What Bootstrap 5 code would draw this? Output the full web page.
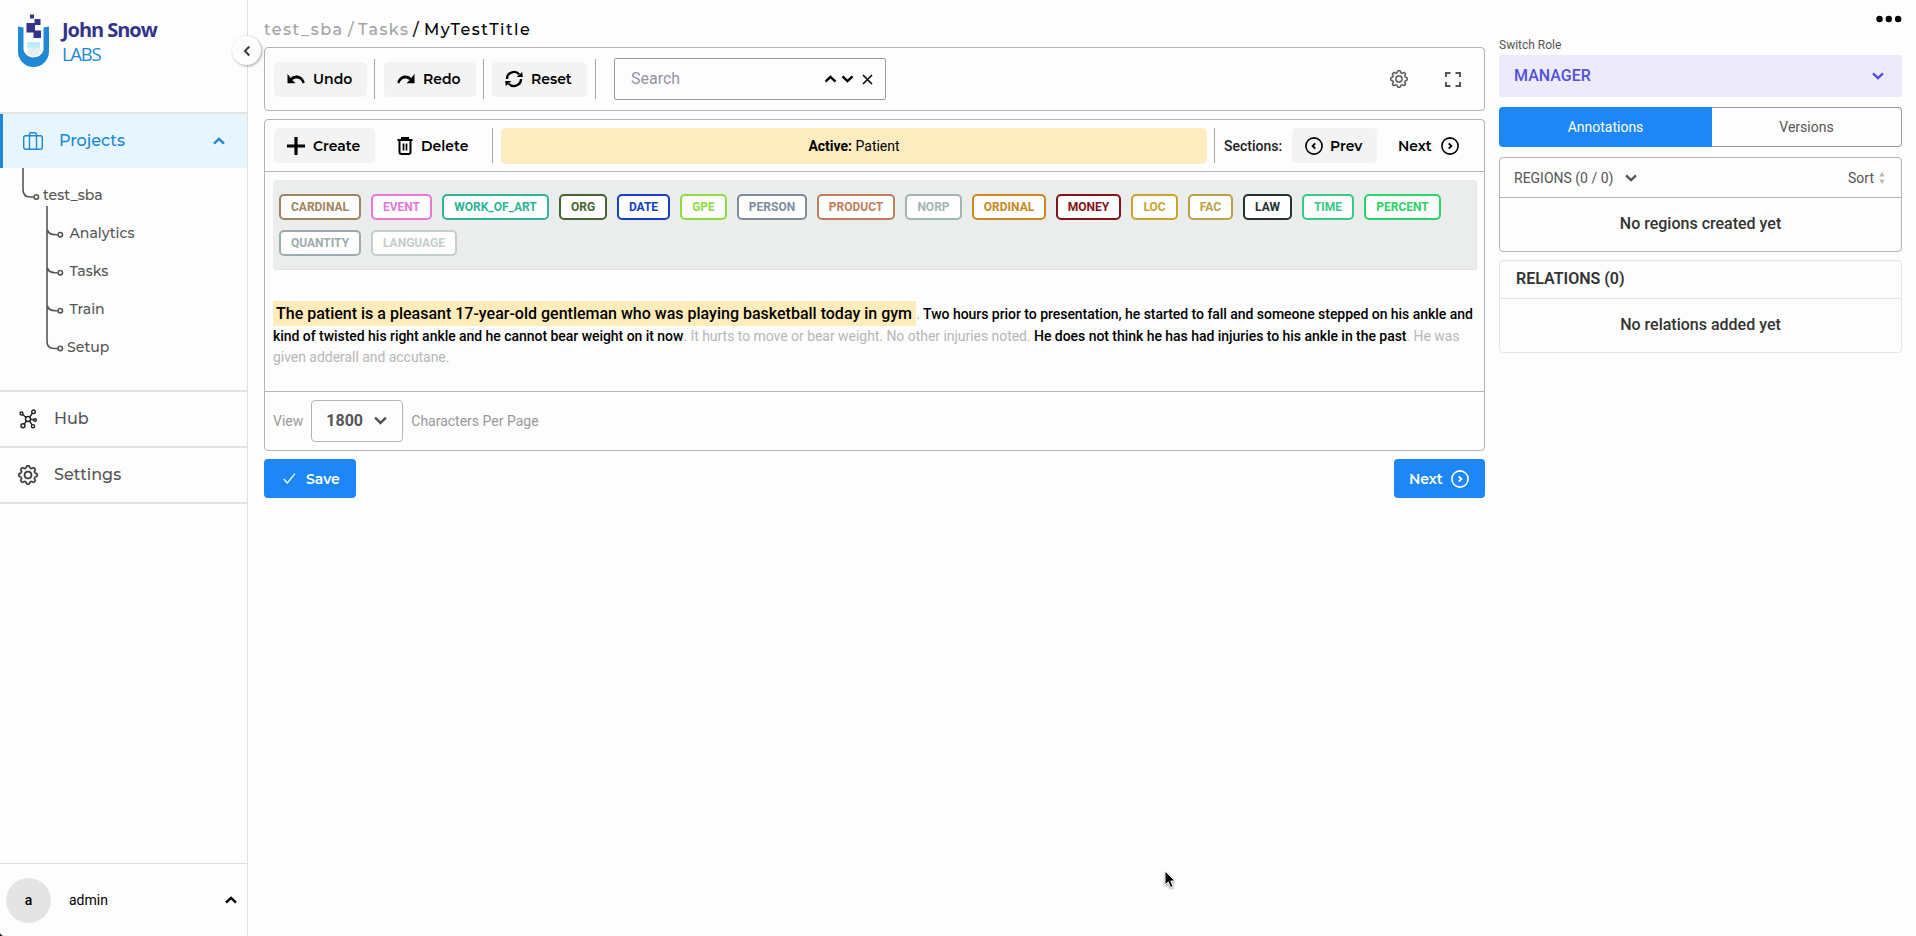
<!DOCTYPE html>
<html lang="en">
<head>
<meta charset="utf-8">
<title>MyTestTitle</title>
<link href="https://cdn.jsdelivr.net/npm/bootstrap@5.3.0/dist/css/bootstrap.min.css" rel="stylesheet">
<style>
  body { font-family: Roboto, "Liberation Sans", sans-serif; font-size: 14px; line-height: 20px; background: #fdfdfd; color: #000; height: 936px; overflow: hidden; }
  svg { display: block; flex: none; }
  .geo { font-family: Montserrat, Inter, "Open Sans", sans-serif; font-weight: 500; }

  .side { width: 248px; border-right: 1px solid #e0e0e0; height: 936px; flex: none; }
  .brand { height: 114px; border-bottom: 2px solid #e2e2e2; padding: 13px 0 0 18px; }
  .brand-name { font: 700 20px/24px "Open Sans", sans-serif; color: #33338c; letter-spacing: -1.05px; margin-top: 5px; }
  .brand-sub { font: 400 18.5px/22px "Open Sans", sans-serif; color: #2088d4; letter-spacing: -1.3px; margin-top: 1px; }
  .side-link { height: 56px; border-bottom: 2px solid #e2e2e2; color: #555; font-size: 16px; padding-left: 18px; }
  .side-link.active { height: 54px; border-bottom: 0; border-left: 3px solid #2088d4; background: #e6f5fe; color: #2088d4; padding: 0 22px 0 20px; }
  .tree { height: 224px; border-bottom: 2px solid #e2e2e2; color: #555; padding-top: 8px; font-size: 14.1px; }
  .tree a { display: block; height: 38px; line-height: 38px; color: inherit; text-decoration: none; padding-left: 69.5px; }
  .user { border-top: 1px solid #dedede; height: 73px; padding: 0 10px 0 6px; }
  .avatar { width: 45px; height: 45px; background: #e4e4e4; font-weight: 500; font-size: 14px; }
  .fold { width: 29px; height: 29px; left: 232px; top: 36px; background: #fdfdfd; box-shadow: 1px 1px 3px rgba(0,0,0,.35); z-index: 2; }

  .work { width: 1221px; margin-left: 16px; flex: none; padding-top: 20px; }
  .crumbs { height: 20px; font-size: 16px; letter-spacing: 1.45px; color: #a3a3a3; margin-bottom: 7px; }
  .box { border: 1px solid #b4b4b4; border-radius: 4px; }
  .tool { height: 35px; border-radius: 5px; background: #f3f3f3; font-size: 14px; font-weight: 600; padding: 0 0 0 13px; gap: 8px; color: #000; text-decoration: none; }
  .rule { width: 1px; background: #a6a6a6; flex: none; }
  .search { width: 272px; height: 42px; border: 1px solid #9a9a9a; border-radius: 2px; color: #9494a4; font-size: 16px; padding: 0 12px 0 16px; }
  .active-bar { background: #fcecbf; border-radius: 5px; height: 36px; width: 706px; }
  .labels { background: #ebecec; border-radius: 4px; height: 90px; margin: 8px 7px 0 8px; padding: 14px 6px 0; gap: 10px; border: 1px solid #e2e3e3; border-width: 0 1px 1px 0; }
  .tag { height: 26px; border: 2px solid; border-radius: 5px; background: #fefefe; font-size: 12px; font-weight: 700; line-height: 22px; text-align: center; }
  .note { margin: 33px 8px 0; height: 88px; line-height: 21.5px; color: #b7b7b7; white-space: nowrap; letter-spacing: -.04px; }
  .note b { font-weight: 500; color: #000; }
  .note .hit { background: #ffecbb; font-size: 16px; font-weight: 500; color: #000; padding: 3px 4px 3px 3px; letter-spacing: 0; }
  .pager { border-top: 1px solid #b4b4b4; height: 58px; color: #999; padding-left: 8px; }
  .pager-size { width: 92px; height: 42px; border: 1px solid #b4b4b4; border-radius: 4px; font-size: 16px; font-weight: 700; color: #555; margin: 0 8px; padding: 0 15px 0 14px; }
  .go { background: #1e87f7; color: #fff; height: 39px; border-radius: 4px; font-weight: 600; font-size: 14px; }

  .panel { width: 403px; margin-left: 14px; flex: none; padding-top: 15px; }
  .role { height: 42px; background: #edeafc; color: #5350d8; font-size: 16px; font-weight: 500; border-radius: 3px; padding: 0 18px 0 15px; }
  .tab-l { width: 213px; background: #1e87f7; color: #fff; border-radius: 4px 0 0 4px; }
  .tab-r { border: 1px solid #999; border-left: 0; border-radius: 0 4px 4px 0; color: #555; }
  .empty { font-size: 16px; font-weight: 500; color: #333; }
</style>
</head>
<body>
<svg width="0" height="0" class="position-absolute">
  <symbol id="gear" viewBox="0 0 16 16"><path d="M8 4.754a3.246 3.246 0 1 0 0 6.492 3.246 3.246 0 0 0 0-6.492zM5.754 8a2.246 2.246 0 1 1 4.492 0 2.246 2.246 0 0 1-4.492 0z"/><path d="M9.796 1.343c-.527-1.79-3.065-1.79-3.592 0l-.094.319a.873.873 0 0 1-1.255.52l-.292-.16c-1.64-.892-3.433.902-2.54 2.541l.159.292a.873.873 0 0 1-.52 1.255l-.319.094c-1.79.527-1.79 3.065 0 3.592l.319.094a.873.873 0 0 1 .52 1.255l-.16.292c-.892 1.64.901 3.434 2.541 2.54l.292-.159a.873.873 0 0 1 1.255.52l.094.319c.527 1.79 3.065 1.79 3.592 0l.094-.319a.873.873 0 0 1 1.255-.52l.292.16c1.64.893 3.434-.902 2.54-2.541l-.159-.292a.873.873 0 0 1 .52-1.255l.319-.094c1.79-.527 1.79-3.065 0-3.592l-.319-.094a.873.873 0 0 1-.52-1.255l.16-.292c.893-1.64-.902-3.433-2.541-2.54l-.292.159a.873.873 0 0 1-1.255-.52l-.094-.319zm-2.633.283c.246-.835 1.428-.835 1.674 0l.094.319a1.873 1.873 0 0 0 2.693 1.115l.291-.16c.764-.415 1.6.42 1.184 1.185l-.159.292a1.873 1.873 0 0 0 1.116 2.692l.318.094c.835.246.835 1.428 0 1.674l-.319.094a1.873 1.873 0 0 0-1.115 2.693l.16.291c.415.764-.42 1.6-1.185 1.184l-.291-.159a1.873 1.873 0 0 0-2.693 1.116l-.094.318c-.246.835-1.428.835-1.674 0l-.094-.319a1.873 1.873 0 0 0-2.692-1.115l-.292.16c-.764.415-1.6-.42-1.184-1.185l.159-.291A1.873 1.873 0 0 0 1.945 8.93l-.319-.094c-.835-.246-.835-1.428 0-1.674l.319-.094A1.873 1.873 0 0 0 3.06 4.377l-.16-.292c-.415-.764.42-1.6 1.185-1.184l.292.159a1.873 1.873 0 0 0 2.692-1.115l.094-.319z"/></symbol>
  <symbol id="up" viewBox="0 0 12 8"><path d="M1 6.6 6 1.8l5 4.8" fill="none" stroke="currentColor" stroke-width="2.4"/></symbol>
  <symbol id="down" viewBox="0 0 12 8"><path d="M1 1.4 6 6.2l5-4.8" fill="none" stroke="currentColor" stroke-width="2.4"/></symbol>
  <symbol id="undo" viewBox="0 0 18 12"><path d="M.5.8v9.4h8L5.3 7.1C8.7 4.2 14 4.8 15.6 10.4l2.2-.8C15.6 2.200 8.500.700 3.700 5z"/></symbol>
  <symbol id="ring" viewBox="0 0 18 18"><circle cx="9" cy="9" r="8.100" fill="none" stroke="currentColor" stroke-width="1.6"/><path d="m7.700 6.300 2.700 2.700-2.700 2.700" fill="none" stroke="currentColor" stroke-width="1.800"/></symbol>
</svg>

<div class="d-flex position-relative">
  <nav class="side d-flex flex-column">
    <div class="brand d-flex">
      <svg width="32" height="55" viewBox="0 0 32 55">
        <path d="M0 13.500 5.500 14.500V37a10.300 10 0 0 0 20 0V14.500L31 13.500V38.500a15.500 15.500 0 0 1-31 0z" fill="#2088d4"/>
        <path d="M9.500 29H22v8q0 6-6.250 6T9.500 37z" fill="#e6eef3"/><path d="M9.500 29H22v5.500H9.500z" fill="#b9ebfb"/>
        <g fill="#33338c"><path d="M12 1.500h4v4h-4zM16.500 6h6v6h-6zM8.500 10h8.500v9.500H8.500zM15.500 17.500h7.500v7.500h-7.500z"/></g>
      </svg>
      <div class="ms-2 ps-1"><div class="brand-name text-nowrap">John Snow</div><div class="brand-sub">LABS</div></div>
    </div>
    <a class="side-link active geo d-flex align-items-center text-decoration-none">
      <svg width="20" height="18" viewBox="0 0 20 18" fill="none" stroke="currentColor" stroke-width="1.400"><rect x=".7" y="3.700" width="18.600" height="13.600" rx="2"/><path d="M6.500 17V2.500q0-1.800 1.800-1.800h3.400q1.800 0 1.800 1.800V17"/></svg>
      <span class="flex-fill" style="padding-left:16px">Projects</span>
      <svg width="12" height="8"><use href="#up"/></svg>
    </a>
    <div class="tree geo position-relative">
      <svg class="position-absolute top-0 start-0" width="70" height="200" fill="none" stroke="#555" stroke-width="1.600">
        <path d="M23 0v21q0 8 7 8h4M47 38v135q0 7.500 7 7.500h4M47.500 62q1 4.700 8 4.700h2M47.500 100q1 4.700 8 4.700h2M47.500 138q1 4.700 8 4.700h2"/>
        <g><circle cx="36.300" cy="29" r="2.200"/><circle cx="60.300" cy="66.700" r="2.200"/><circle cx="60.300" cy="104.700" r="2.200"/><circle cx="60.300" cy="142.700" r="2.200"/><circle cx="60.300" cy="180.500" r="2.200"/></g>
      </svg>
      <a style="padding-left:43px">test_sba</a><a>Analytics</a><a>Tasks</a><a>Train</a><a style="padding-left:67px">Setup</a>
    </div>
    <a class="side-link geo d-flex align-items-center text-decoration-none">
      <svg width="20" height="20" viewBox="0 0 20 20" fill="none" stroke="#222" stroke-width="1.400"><circle cx="10" cy="10" r="2.500"/><circle cx="3.500" cy="4.500" r="1.500"/><circle cx="15.500" cy="2.800" r="1.800"/><circle cx="17" cy="11" r="1.300"/><circle cx="5" cy="16.700" r="2"/><circle cx="15" cy="17.200" r="1.600"/><path d="m8 8.500-3.300-3M11.700 8l2.600-3.700M12.500 10.300l3 .4M8.500 12l-2.300 3.200M11.500 12l2.600 3.800"/></svg>
      <span style="padding-left:16px">Hub</span>
    </a>
    <a class="side-link geo d-flex align-items-center text-decoration-none">
      <svg width="20" height="20" fill="#333" stroke="#333" stroke-width=".4"><use href="#gear"/></svg>
      <span style="padding-left:16px">Settings</span>
    </a>
    <div class="user d-flex align-items-center mt-auto">
      <span class="avatar rounded-circle d-flex align-items-center justify-content-center">a</span>
      <span class="flex-fill" style="padding-left:18px">admin</span>
      <svg width="12" height="8"><use href="#up"/></svg>
    </div>
  </nav>
  <button class="fold position-absolute rounded-circle border-0 p-0 d-flex align-items-center justify-content-center"><svg width="8" height="12"><path d="M6.300 1.500 2 6l4.300 4.500" fill="none" stroke="#444" stroke-width="2.200"/></svg></button>

  <main class="work">
    <div class="crumbs geo d-flex"><span style="width:84px">test_sba</span><span style="width:10px">/</span><span style="width:55px">Tasks</span><span class="text-black" style="width:11px">/</span><span class="text-black">MyTestTitle</span></div>

    <div class="box d-flex align-items-center" style="height:64px;padding-left:9px">
      <a class="tool geo d-flex align-items-center" style="width:93px"><svg width="18" height="12"><use href="#undo"/></svg>Undo</a>
      <i class="rule" style="height:40px;margin:0 9px 0 7px"></i>
      <a class="tool geo d-flex align-items-center" style="width:92px"><svg width="18" height="12" style="transform:scaleX(-1)"><use href="#undo"/></svg>Redo</a>
      <i class="rule" style="height:40px;margin:0 8px 0 7px"></i>
      <a class="tool geo d-flex align-items-center" style="width:95px"><svg width="18" height="18" viewBox="0 0 18 18"><path d="M2 9A7 7 0 0 1 14.200 4.300M16 9A7 7 0 0 1 3.800 13.700" fill="none" stroke="#000" stroke-width="2.300"/><path d="M11.600 7H17.800l-.6-5zM6.400 11H.2l.6 5z"/></svg>Reset</a>
      <i class="rule" style="height:40px;margin:0 18px 0 8px"></i>
      <div class="search d-flex align-items-center">
        <span class="flex-fill">Search</span>
        <svg width="13" height="8" color="#000"><use href="#up"/></svg>
        <svg class="ms-1" width="13" height="8" color="#000"><use href="#down"/></svg>
        <svg width="11" height="11" style="margin-left:8px"><path d="m1 1 9 9m0-9-9 9" stroke="#000" stroke-width="1.500"/></svg>
      </div>
      <svg class="ms-auto" width="18" height="18" fill="#555" stroke="#555" stroke-width=".4"><use href="#gear"/></svg>
      <svg width="16" height="15" viewBox="0 0 16 15" style="margin:0 23px 0 37px"><path d="M1 5V1h4.500M10.500 1H15v4M15 10v4h-4.500M5.500 14H1v-4" fill="none" stroke="#555" stroke-width="2"/></svg>
    </div>

    <div class="box" style="margin-top:8px;height:332px">
      <div class="d-flex align-items-center" style="height:52px;padding-left:9px;border-bottom:1px solid #b4b4b4">
        <a class="tool geo d-flex align-items-center" style="width:101px"><svg width="18" height="18"><path d="M9 0v18M0 9h18" stroke="#000" stroke-width="3.200"/></svg>Create</a>
        <a class="tool geo d-flex align-items-center bg-transparent" style="width:110px;padding-left:22px"><svg width="16" height="18" viewBox="0 0 16 18" fill="none" stroke="#000"><path d="M.5 3h15M5 2.500V1h6v1.500" stroke-width="2"/><path d="M2.500 4v11q0 2 2 2h7q2 0 2-2V4" stroke-width="2"/><path d="M6.500 6.500v7M9.500 6.500v7" stroke-width="1.700"/></svg><span>Delete</span></a>
        <i class="rule" style="height:35px;margin:0 8px 0 7px"></i>
        <div class="active-bar d-flex align-items-center justify-content-center"><span><b>Active:</b> Patient</span></div>
        <i class="rule" style="height:35px;margin:0 9px 0 7px"></i>
        <span style="width:68px;color:#222;font-weight:500">Sections:</span>
        <a class="tool geo d-flex align-items-center" style="width:85px;gap:7px"><svg width="18" height="18" style="transform:scaleX(-1)"><use href="#ring"/></svg>Prev</a>
        <a class="tool geo d-flex align-items-center bg-transparent" style="padding-left:21px;gap:9px">Next<svg width="18" height="18"><use href="#ring"/></svg></a>
      </div>

      <div class="labels d-flex flex-wrap align-content-start">
        <span class="tag" style="width:82px;color:#a08461">CARDINAL</span>
        <span class="tag" style="width:61px;color:#e877d8">EVENT</span>
        <span class="tag" style="width:107px;color:#2db596">WORK_OF_ART</span>
        <span class="tag" style="width:48px;color:#486333">ORG</span>
        <span class="tag" style="width:53px;color:#1540c4">DATE</span>
        <span class="tag" style="width:47px;color:#8edb42">GPE</span>
        <span class="tag" style="width:70px;color:#7e8d9e">PERSON</span>
        <span class="tag" style="width:78px;color:#bd7f5c">PRODUCT</span>
        <span class="tag" style="width:57px;color:#a2b5b5">NORP</span>
        <span class="tag" style="width:74px;color:#cc8722">ORDINAL</span>
        <span class="tag" style="width:65px;color:#831419">MONEY</span>
        <span class="tag" style="width:47px;color:#cba32b">LOC</span>
        <span class="tag" style="width:45px;color:#b8a244">FAC</span>
        <span class="tag" style="width:49px;color:#253133">LAW</span>
        <span class="tag" style="width:52px;color:#3bc989">TIME</span>
        <span class="tag" style="width:77px;color:#2bd466">PERCENT</span>
        <span class="tag" style="width:82px;color:#9dabae">QUANTITY</span>
        <span class="tag" style="width:86px;color:#c4cfca">LANGUAGE</span>
      </div>

      <div class="note"><span class="hit">The patient is a pleasant 17-year-old gentleman who was playing basketball today in gym</span>. <b>Two hours prior to presentation, he started to fall and someone stepped on his ankle and</b><br><b>kind of twisted his right ankle and he cannot bear weight on it now</b>. It hurts to move or bear weight. No other injuries noted. <b>He does not think he has had injuries to his ankle in the past</b>. He was<br>given adderall and accutane.</div>

      <div class="pager d-flex align-items-center">View
        <div class="pager-size d-flex align-items-center justify-content-between">1800<svg width="13" height="9"><use href="#down"/></svg></div>
        Characters Per Page</div>
    </div>

    <div class="d-flex justify-content-between" style="margin-top:8px">
      <a class="go geo d-flex align-items-center text-decoration-none" style="width:92px;padding-left:19px"><svg width="13" height="11"><path d="m.7 6 3.600 4L12 .7" fill="none" stroke="#fff" stroke-width="1.200"/></svg><span style="padding-left:10px">Save</span></a>
      <a class="go geo d-flex align-items-center text-decoration-none" style="width:91px;padding-left:15px;gap:8px">Next<svg width="18" height="18"><use href="#ring"/></svg></a>
    </div>
  </main>

  <aside class="panel">
    <svg class="ms-auto" width="30" height="8"><circle cx="7.500" cy="4" r="3.200"/><circle cx="16.800" cy="4" r="3.200"/><circle cx="26.100" cy="4" r="3.200"/></svg>
    <div style="font-size:12px;height:20px;margin:12px 0 0;color:#555">Switch Role</div>
    <div class="role d-flex align-items-center justify-content-between"><span>MANAGER</span><svg width="12" height="8"><use href="#down"/></svg></div>
    <div class="d-flex" style="height:40px;margin-top:10px">
      <div class="tab-l d-flex align-items-center justify-content-center">Annotations</div>
      <div class="tab-r flex-fill d-flex align-items-center justify-content-center">Versions</div>
    </div>
    <div class="box" style="height:95px;margin-top:10px">
      <div class="d-flex align-items-center" style="height:40px;border-bottom:1px solid #b4b4b4;padding:0 16px 0 14px;color:#555">
        <span>REGIONS (0 / 0)</span><svg width="12" height="8" style="margin-left:12px"><use href="#down"/></svg>
        <span class="ms-auto">Sort</span><svg width="6" height="12" style="margin-left:5px" fill="#b5b5b5"><path d="M3 0 5.500 4.500h-5zM3 12 5.500 7.500h-5z"/></svg>
      </div>
      <div class="empty text-center" style="padding-top:16px">No regions created yet</div>
    </div>
    <div class="box" style="height:93px;margin-top:8px;border-color:#e4e4e4">
      <div class="empty" style="height:38px;line-height:36px;border-bottom:1px solid #e4e4e4;padding-left:16px;font-weight:600">RELATIONS (0)</div>
      <div class="empty text-center" style="padding-top:16px">No relations added yet</div>
    </div>
  </aside>

  <svg class="position-absolute" style="left:1163px;top:870px" width="14" height="20" viewBox="0 0 14 20"><path d="M2 1v14l3.200-3 2.400 5.600 2.600-1.100L7.800 11H12z" fill="#000" stroke="#fff" stroke-width="1" style="filter:drop-shadow(0 1px 1px rgba(0,0,0,.4))"/></svg>
  <svg class="position-absolute start-0 bottom-0" width="4" height="4"><path d="M0 1v3h4Q1 4 0 1z"/></svg>
</div>
<script src="https://cdn.jsdelivr.net/npm/bootstrap@5.3.0/dist/js/bootstrap.bundle.min.js"></script>
</body>
</html>
